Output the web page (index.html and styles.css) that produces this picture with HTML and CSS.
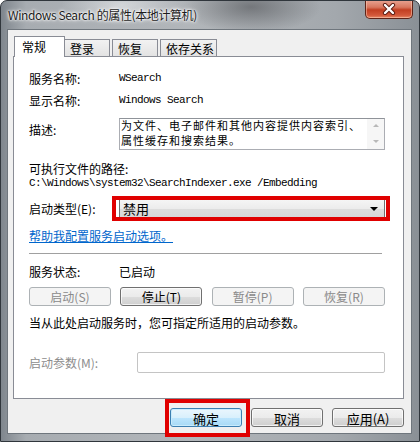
FILE: index.html
```html
<!DOCTYPE html>
<html lang="zh-CN">
<head>
    <meta charset="UTF-8">
    <title>Windows Search 的属性(本地计算机)</title>
    <link rel="stylesheet" href="styles.css">
</head>
<body>
    <div class="window">
        <div class="titlebar">
            <span class="title">Windows Search 的属性(本地计算机)</span>
            <span class="close">
                <svg width="14" height="12" viewBox="0 0 14 12">
                    <path d="M3 2 L11 10 M11 2 L3 10" stroke="#5a1a10" stroke-width="4.2" stroke-linecap="round"/>
                    <path d="M3 2 L11 10 M11 2 L3 10" stroke="#fff" stroke-width="2.4" stroke-linecap="round"/>
                </svg>
            </span>
        </div>

        <div class="client">
            <div class="tabs">
                <span class="tab active">常规</span>
                <span class="tab t-login">登录</span>
                <span class="tab t-recover">恢复</span>
                <span class="tab t-deps">依存关系</span>
            </div>

            <div class="panel">
                <div class="row r-name">
                    <span class="label">服务名称:</span>
                    <span class="mono">WSearch</span>
                </div>
                <div class="row r-display">
                    <span class="label">显示名称:</span>
                    <span class="mono">Windows Search</span>
                </div>
                <div class="row r-desc">
                    <span class="label desc-label">描述:</span>
                    <div class="desc-box">
                        <div class="desc-text">
                            <div>为文件、电子邮件和其他内容提供内容索引、</div>
                            <div>属性缓存和搜索结果。</div>
                        </div>
                        <div class="scrollbar">
                            <span class="arrow up"></span>
                            <span class="arrow down"></span>
                        </div>
                    </div>
                </div>
                <div class="line r-pathlabel">可执行文件的路径:</div>
                <div class="line mono r-path">C:\Windows\system32\SearchIndexer.exe /Embedding</div>
                <div class="row r-type">
                    <span class="label">启动类型(E):</span>
                    <div class="combo-wrap">
                        <div class="combo">
                            <span>禁用</span>
                            <span class="combo-arrow"></span>
                        </div>
                        <span class="mark mark-combo"></span>
                    </div>
                </div>
                <div class="line r-link"><a href="#" class="link">帮助我配置服务启动选项。</a></div>
                <div class="separator"></div>
                <div class="row r-status">
                    <span class="label">服务状态:</span>
                    <span>已启动</span>
                </div>
                <div class="btn-row">
                    <button class="btn" disabled>启动(S)</button>
                    <button class="btn">停止(T)</button>
                    <button class="btn" disabled>暂停(P)</button>
                    <button class="btn" disabled>恢复(R)</button>
                </div>
                <div class="line r-hint">当从此处启动服务时，您可指定所适用的启动参数。</div>
                <div class="row r-param">
                    <span class="label param-label">启动参数(M):</span>
                    <div class="param-input"></div>
                </div>
            </div>

            <div class="footer">
                <div class="ok-wrap">
                    <button class="btn dlg default">确定</button>
                    <span class="mark mark-ok"></span>
                </div>
                <button class="btn dlg">取消</button>
                <button class="btn dlg">应用(A)</button>
            </div>
        </div>
    </div>
</body>
</html>
```

FILE: styles.css
```css
body {
    margin: 0;
    font-family: "Noto Sans CJK SC", "Liberation Sans", sans-serif;
    font-size: 12px;
    color: #000;
    background: #fff;
}

.window {
    width: 420px;
    height: 442px;
    box-sizing: border-box;
    border: 1px solid #30363c;
    border-radius: 7px 7px 0 0;
    background:
        radial-gradient(ellipse 70px 26px at 250px 6px, rgba(70, 72, 76, 0.55), transparent),
        radial-gradient(ellipse 60px 20px at 120px 4px, rgba(235, 238, 240, 0.6), transparent),
        linear-gradient(to right, #7f868d, #a7acb1 6%, #b2b6ba 45%, #a3a8ad 80%, #8a9096);
    display: flex;
    flex-direction: column;
    overflow: hidden;
}

.titlebar {
    height: 28px;
    display: flex;
    justify-content: space-between;
    align-items: flex-start;
    padding: 0 6px 0 7px;
}

.title {
    margin-top: 5px;
    font-size: 12px;
    letter-spacing: -0.4px;
    line-height: 18px;
    color: #1c1c1c;
    text-shadow: 0 0 5px #fff, 0 0 3px #fff, 0 0 2px #fff;
}

.close {
    width: 48px;
    height: 19px;
    box-sizing: border-box;
    margin-top: -1px;
    border: 1px solid #5e2418;
    border-top: none;
    border-radius: 0 0 5px 5px;
    background: linear-gradient(to bottom, #e9a594 0%, #d8775f 40%, #c23f22 55%, #d3583a 85%, #e78b68 100%);
    box-shadow: inset 0 0 0 1px rgba(255, 210, 190, 0.5);
    display: flex;
    align-items: center;
    justify-content: center;
}

.client {
    flex: 1;
    margin: 0 7px 7px 6px;
    border: 1px solid #6f767d;
    background: #f0f0f0;
    padding: 6px 7px 0 5px;
    display: flex;
    flex-direction: column;
}

/* tabs */
.tabs {
    height: 20px;
    display: flex;
    align-items: flex-end;
    padding-left: 1px;
}

.tab {
    height: 17px;
    box-sizing: border-box;
    border: 1px solid #898c95;
    border-bottom: none;
    background: linear-gradient(to bottom, #f2f2f2, #e3e3e3);
    font-size: 12px;
    line-height: 17px;
    padding-left: 5px;
    white-space: nowrap;
}

.tab.active {
    height: 21px;
    width: 51px;
    margin-bottom: -1px;
    background: #fff;
    position: relative;
    z-index: 1;
    padding-left: 7px;
    line-height: 20px;
}

.t-login { width: 46px; margin-left: -1px; }
.t-recover { width: 46px; margin-left: 2px; }
.t-deps { width: 57px; margin-left: 2px; }

.panel {
    height: 343px;
    box-sizing: border-box;
    border: 1px solid #898c95;
    background: #fff;
    padding: 0 18px 0 15px;
}

.row {
    display: flex;
    align-items: center;
}

.label {
    width: 90px;
    flex-shrink: 0;
}

.mono {
    font-family: "Liberation Mono", monospace;
    font-size: 11px;
    letter-spacing: -0.6px;
}

.line {
    height: 14px;
    line-height: 14px;
}

.r-name { height: 16px; margin-top: 13px; }
.r-display { height: 16px; margin-top: 6px; }

.r-desc {
    height: 32px;
    margin-top: 10px;
    align-items: flex-start;
}

.desc-label { margin-top: 5px; line-height: 14px; }

.desc-box {
    flex: 1;
    height: 32px;
    box-sizing: border-box;
    border: 1px solid #abadb3;
    border-top-color: #8f9399;
    display: flex;
}

.desc-text {
    flex: 1;
    margin-top: -1px;
    font-size: 11px;
    letter-spacing: 1px;
    line-height: 15px;
    padding-left: 1px;
    white-space: nowrap;
}

.scrollbar {
    width: 17px;
    background: #f6f6f6;
    display: flex;
    flex-direction: column;
    justify-content: space-between;
    align-items: center;
    padding: 5px 0 6px;
    box-sizing: border-box;
}

.arrow {
    width: 0;
    height: 0;
    border-left: 3px solid transparent;
    border-right: 3px solid transparent;
}

.arrow.up { border-bottom: 3px solid #b8b8b8; }
.arrow.down { border-top: 3px solid #b8b8b8; }

.r-pathlabel { margin-top: 12px; }

.r-type {
    margin-top: 8px;
    height: 21px;
}

.combo-wrap {
    flex: 1;
    position: relative;
}

.combo {
    height: 21px;
    box-sizing: border-box;
    border: 1px solid #707070;
    border-radius: 2px;
    background: linear-gradient(to bottom, #f6f6f6 0%, #ececec 50%, #dddddd 51%, #d6d6d6 100%);
    display: flex;
    align-items: center;
    justify-content: space-between;
    padding: 0 6px 0 3px;
    font-size: 13px;
}

.combo-arrow {
    width: 0;
    height: 0;
    border-left: 4px solid transparent;
    border-right: 4px solid transparent;
    border-top: 4px solid #000;
}

/* red annotation boxes drawn over the dialog */
.mark {
    position: absolute;
    border: 4px solid #e00000;
    pointer-events: none;
}

.mark-combo {
    left: -7px;
    right: -5px;
    top: -2px;
    bottom: -2px;
}

.r-link { margin-top: 10px; }

.link {
    color: #0066cc;
    text-decoration: underline;
}

.separator {
    margin-top: 10px;
    width: 353px;
    height: 1px;
    background: #a0a0a0;
}

.r-status { height: 14px; margin-top: 10px; }

.btn-row {
    margin-top: 9px;
    display: flex;
    justify-content: space-between;
}

.btn {
    width: 82px;
    height: 19px;
    box-sizing: border-box;
    padding: 0;
    font-family: inherit;
    font-size: 12px;
    color: #000;
    border: 1px solid #707070;
    border-radius: 3px;
    background: linear-gradient(to bottom, #f2f2f2 0%, #ebebeb 50%, #dddddd 51%, #cfcfcf 100%);
    box-shadow: inset 0 0 0 1px rgba(255, 255, 255, 0.7);
}

.btn:disabled {
    color: #8a8a8a;
    border-color: #adb2b5;
    background: #f4f4f4;
    box-shadow: none;
}

.r-hint { margin-top: 10px; }

.r-param {
    margin-top: 22px;
    height: 21px;
}

.param-label {
    width: 108px;
    color: #8d8d8d;
}

.param-input {
    flex: 1;
    height: 21px;
    box-sizing: border-box;
    border: 1px solid #c4c4c4;
    border-radius: 2px;
    background: #fff;
}

.footer {
    margin-top: 9px;
    display: flex;
    justify-content: flex-end;
    gap: 9px;
}

.btn.dlg {
    width: 72px;
    font-size: 13px;
}

.btn.default {
    border-color: #3c7fb1;
    background: linear-gradient(to bottom, #eaf6fd 0%, #d9f0fc 50%, #bee6fd 51%, #a7d9f5 100%);
    box-shadow: inset 0 0 0 1px #c9ecfd;
}

.ok-wrap {
    position: relative;
    display: flex;
}

.mark-ok {
    left: -5px;
    right: -8px;
    top: -9px;
    bottom: -10px;
}
```
